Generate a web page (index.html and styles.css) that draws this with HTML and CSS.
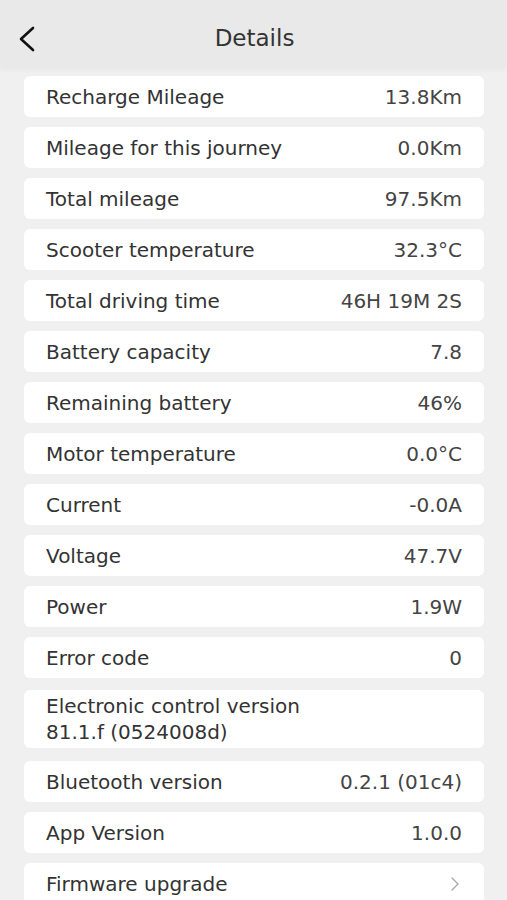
FILE: index.html
```html
<!DOCTYPE html>
<html lang="en">
<head>
    <meta charset="UTF-8">
    <meta name="viewport" content="width=device-width, initial-scale=1.0">
    <title>Details</title>
    <link rel="stylesheet" href="styles.css">
</head>
<body>
    <div class="header">
        <span class="back">
            <svg width="20" height="26" viewBox="0 0 20 26"><path d="M16 2 L4 13 L16 24" fill="none" stroke="#111" stroke-width="2.6" stroke-linecap="round" stroke-linejoin="round"/></svg>
        </span>
        <h1>Details</h1>
    </div>

    <div class="list">
        <div class="row"><span>Recharge Mileage</span><span class="val">13.8Km</span></div>
        <div class="row"><span>Mileage for this journey</span><span class="val">0.0Km</span></div>
        <div class="row"><span>Total mileage</span><span class="val">97.5Km</span></div>
        <div class="row"><span>Scooter temperature</span><span class="val">32.3°C</span></div>
        <div class="row"><span>Total driving time</span><span class="val">46H 19M 2S</span></div>
        <div class="row"><span>Battery capacity</span><span class="val">7.8</span></div>
        <div class="row"><span>Remaining battery</span><span class="val">46%</span></div>
        <div class="row"><span>Motor temperature</span><span class="val">0.0°C</span></div>
        <div class="row"><span>Current</span><span class="val">-0.0A</span></div>
        <div class="row"><span>Voltage</span><span class="val">47.7V</span></div>
        <div class="row"><span>Power</span><span class="val">1.9W</span></div>
        <div class="row"><span>Error code</span><span class="val">0</span></div>
        <div class="row tall">
            <span>Electronic control version</span>
            <span>81.1.f (0524008d)</span>
        </div>
        <div class="row"><span>Bluetooth version</span><span class="val">0.2.1 (01c4)</span></div>
        <div class="row"><span>App Version</span><span class="val">1.0.0</span></div>
        <div class="row"><span>Firmware upgrade</span>
            <svg class="arrow" width="10" height="16" viewBox="0 0 10 16"><path d="M2 2 L8 8 L2 14" fill="none" stroke="#aaa" stroke-width="1.4" stroke-linecap="round" stroke-linejoin="round"/></svg>
        </div>
    </div>
</body>
</html>
```

FILE: styles.css
```css
body {
    margin: 0;
    background: #f0f0f0;
    font-family: "DejaVu Sans", sans-serif;
    color: #333;
}
.header {
    height: 68px;
    background: #e9e9e9;
    display: flex;
    align-items: center;
    justify-content: center;
    position: relative;
    box-shadow: 0 2px 4px rgba(0, 0, 0, 0.04);
}
.header h1 {
    margin: 8px 0 0 2px;
    font-size: 23px;
    font-weight: normal;
    color: #333;
}
.back {
    position: absolute;
    left: 17px;
    top: 26px;
    line-height: 0;
}
.list {
    display: flex;
    flex-direction: column;
    gap: 10px;
    padding: 8px 23px 20px 24px;
}
.row {
    background: #fff;
    border-radius: 6px;
    height: 41px;
    padding: 0 22px;
    display: flex;
    align-items: center;
    justify-content: space-between;
    font-size: 20px;
}
.row .val {
    color: #444;
}
.row.tall {
    height: 58px;
    margin: 2px 0 3px;
    flex-direction: column;
    align-items: flex-start;
    justify-content: center;
    line-height: 26px;
}
.arrow {
    margin-right: 2px;
}
```
